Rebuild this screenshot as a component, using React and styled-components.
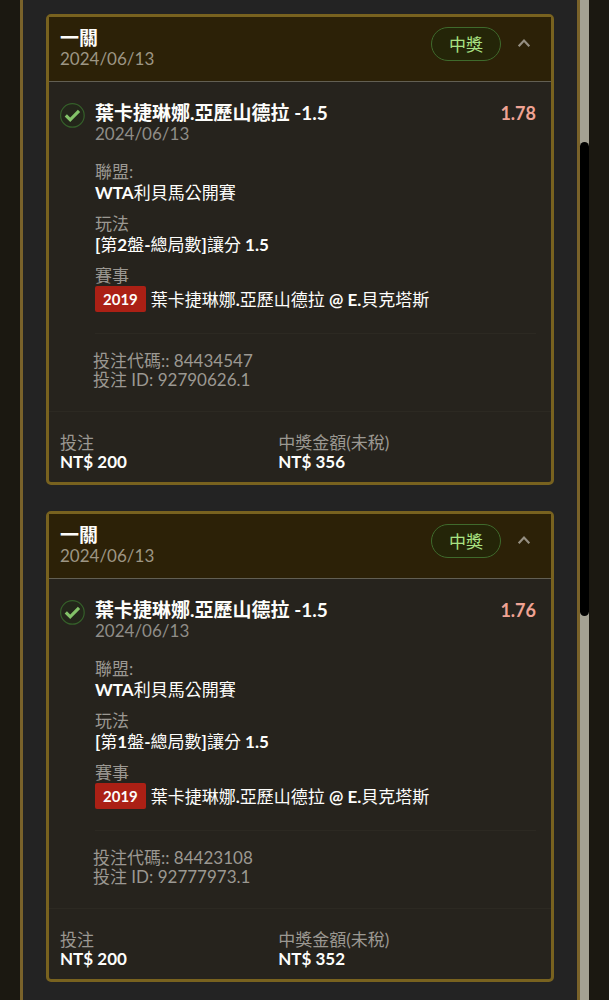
import React from "react";
import styled, { createGlobalStyle } from "styled-components";

const GlobalStyle = createGlobalStyle`
  *, *::before, *::after { box-sizing: border-box; }
  body {
    margin: 0;
    background: #1b1811;
    color: #fdfdfb;
    font-family: Lato, "Noto Sans CJK TC", sans-serif;
    font-size: 17px;
    line-height: 21px;
  }
  h2, h3, p, dl, dd { margin: 0; }
`;

const Page = styled.div`
  display: flex;
  min-height: 100vh;
  padding: 0 20px;
`;

const Panel = styled.main`
  flex: 1;
  min-width: 0;
  display: flex;
  flex-direction: column;
  gap: 26px;
  padding: 14px 23px 18px;
  border: solid #79622a;
  border-width: 0 3px;
  background: #232323;
`;

const Track = styled.div`
  position: relative;
  flex: none;
  width: 9px;
  background: #a4a193;
`;

const Thumb = styled.div`
  position: absolute;
  top: 14.2%;
  left: 0;
  width: 100%;
  height: 47.4%;
  border-radius: 5px;
  background: #000;
`;

const Card = styled.article`
  border: 3px solid #78621f;
  border-radius: 5px;
  background: #26231d;
`;

const CardHeader = styled.header`
  display: flex;
  align-items: flex-start;
  gap: 10px;
  padding: 10px 14px 12px 11px;
  border-bottom: 1px solid #625f53;
  background: #2c2107;
`;

const Grow = styled.div`
  flex: 1;
  min-width: 0;
`;

const CardTitle = styled.h2`
  font-size: 19px;
  line-height: 21px;
  font-weight: 700;
`;

const PickTitle = styled.h3`
  font-size: 19px;
  line-height: 21px;
  font-weight: 700;
`;

const DateText = styled.p`
  color: ${(p) => p.$tone};
`;

const Status = styled.span`
  padding: 6px 17px 5px;
  border: 1px solid #3f6a2c;
  border-radius: 17px;
  background: #242508;
  color: #a9e283;
`;

const Toggle = styled.button`
  display: flex;
  align-items: center;
  justify-content: center;
  width: 26px;
  height: 32px;
  padding: 0;
  border: 0;
  background: none;
  color: #958f82;
  cursor: pointer;
`;

const Selection = styled.section`
  display: flex;
  align-items: flex-start;
  gap: 10px;
  padding: 20px 15px 0 11px;
`;

const IconSlot = styled.div`
  flex: none;
  width: 25px;
  height: 26px;
`;

const PickHead = styled.div`
  display: flex;
  align-items: flex-start;
  gap: 12px;
`;

const Odds = styled.span`
  font-size: 18px;
  line-height: 23px;
  font-weight: 700;
  color: #f0a394;
`;

const Fields = styled.dl`
  display: flex;
  flex-direction: column;
  gap: 10px;
  padding: 17px 0 21px;
  border-bottom: 1px solid #2c2922;
`;

const Label = styled.dt`
  color: #9b9892;
`;

const MatchValue = styled.dd`
  display: flex;
  align-items: center;
  gap: 5px;
`;

const Tag = styled.span`
  padding: 0 8px;
  border-radius: 2px;
  background: #ab2015;
  font-size: 15px;
  line-height: 26px;
  font-weight: 700;
`;

const Meta = styled.section`
  padding: 17px 15px 22px 44px;
  line-height: 19px;
  border-bottom: 1px solid #2c2922;
  color: #9b9892;
`;

const Amounts = styled.dl`
  display: grid;
  grid-template-columns: 5fr 6fr;
  padding: 21px 11px 11px;
  line-height: 19px;
`;

const Money = styled.dd`
  font-weight: 700;
`;

const Mixed = ({ text }) =>
  text
    .split(/([\u4e00-\u9fff]+)/)
    .map((part, i) => (i % 2 ? part : <b key={i}>{part}</b>));

const CheckIcon = () => (
  <svg width="25" height="26" viewBox="0 0 25 26" role="img" aria-label="中獎">
    <circle cx="12.4" cy="13.4" r="11.8" fill="#23261a" stroke="#35602a" strokeWidth="1.2" />
    <path d="M5.8 13.4l4.4 4.4 8.8-9" fill="none" stroke="#83c268" strokeWidth="3.2" />
  </svg>
);

const ChevronUp = () => (
  <svg width="14" height="10" viewBox="0 0 14 10" aria-hidden="true">
    <path d="M1.7 8.2L7 2.6l5.3 5.6" fill="none" stroke="currentColor" strokeWidth="2.2" />
  </svg>
);

const bets = [
  { odds: "1.78", market: "[第2盤-總局數]讓分 1.5", code: "84434547", id: "92790626.1", payout: "356" },
  { odds: "1.76", market: "[第1盤-總局數]讓分 1.5", code: "84423108", id: "92777973.1", payout: "352" },
];

const BetCard = ({ bet }) => (
  <Card>
    <CardHeader>
      <Grow>
        <CardTitle>一關</CardTitle>
        <DateText $tone="#9d9684">2024/06/13</DateText>
      </Grow>
      <Status>中獎</Status>
      <Toggle type="button" aria-label="收合" aria-expanded="true">
        <ChevronUp />
      </Toggle>
    </CardHeader>
    <Selection>
      <IconSlot>
        <CheckIcon />
      </IconSlot>
      <Grow>
        <PickHead>
          <Grow>
            <PickTitle>葉卡捷琳娜.亞歷山德拉 -1.5</PickTitle>
            <DateText $tone="#8f8d88">2024/06/13</DateText>
          </Grow>
          <Odds>{bet.odds}</Odds>
        </PickHead>
        <Fields>
          <div>
            <Label>聯盟:</Label>
            <dd><Mixed text="WTA利貝馬公開賽" /></dd>
          </div>
          <div>
            <Label>玩法</Label>
            <dd><Mixed text={bet.market} /></dd>
          </div>
          <div>
            <Label>賽事</Label>
            <MatchValue>
              <Tag>2019</Tag>
              <span><Mixed text="葉卡捷琳娜.亞歷山德拉 @ E.貝克塔斯" /></span>
            </MatchValue>
          </div>
        </Fields>
      </Grow>
    </Selection>
    <Meta>
      <p>投注代碼:: {bet.code}</p>
      <p>投注 ID: {bet.id}</p>
    </Meta>
    <Amounts>
      <div>
        <Label>投注</Label>
        <Money>NT$ 200</Money>
      </div>
      <div>
        <Label>中獎金額(未稅)</Label>
        <Money>NT$ {bet.payout}</Money>
      </div>
    </Amounts>
  </Card>
);

export default function App() {
  return (
    <>
      <GlobalStyle />
      <Page>
        <Panel>
          {bets.map((bet) => (
            <BetCard key={bet.id} bet={bet} />
          ))}
        </Panel>
        <Track>
          <Thumb />
        </Track>
      </Page>
    </>
  );
}
